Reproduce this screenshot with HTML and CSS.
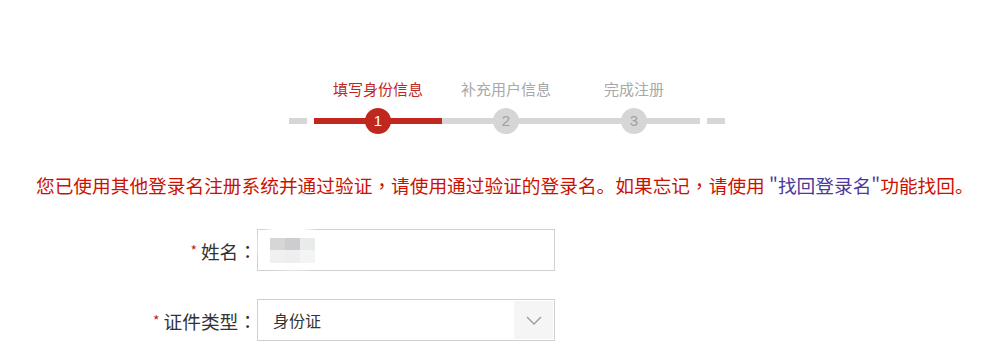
FILE: index.html
```html
<!DOCTYPE html>
<html lang="zh-CN">
<head>
<meta charset="UTF-8">
<title>填写身份信息</title>
<link rel="stylesheet" href="styles.css">
</head>
<body>

<!-- Etapes -->
<div class="steps">
    <span class="dash"></span>
    <div class="step done">
        <div class="step-label">填写身份信息</div>
        <div class="step-track"><span class="step-num">1</span></div>
    </div>
    <div class="step">
        <div class="step-label">补充用户信息</div>
        <div class="step-track"><span class="step-num">2</span></div>
    </div>
    <div class="step last">
        <div class="step-label">完成注册</div>
        <div class="step-track"><span class="step-num">3</span></div>
    </div>
    <span class="dash"></span>
</div>

<p class="notice">您已使用其他登录名注册系统并通过验证<span class="punct" lang="zh-TW">，</span>请使用通过验证的登录名。如果忘记<span class="punct" lang="zh-TW">，</span>请使用 <a href="#">"找回登录名"</a>功能找回。</p>

<!-- Formulaire -->
<form class="form">
    <div class="row">
        <label class="row-label"><i>*</i>姓名<span class="punct" lang="zh-TW">：</span></label>
        <div class="field">
            <input type="text" class="text-input">
            <span class="mosaic">
                <b class="m1"></b><b class="m2"></b><b class="m3"></b>
                <b class="m4"></b><b class="m5"></b><b class="m6"></b>
            </span>
        </div>
    </div>
    <div class="row">
        <label class="row-label"><i>*</i>证件类型<span class="punct" lang="zh-TW">：</span></label>
        <div class="field select">
            <span class="select-value">身份证</span>
            <span class="select-arrow">
                <svg width="16" height="9" viewBox="0 0 16 9"><path d="M1 1 L8 8 L15 1" fill="none" stroke="#9a9a9a" stroke-width="1.3"/></svg>
            </span>
        </div>
    </div>
</form>

</body>
</html>
```

FILE: styles.css
```css
body {
    margin: 0;
    background: #fff;
    font-family: "Noto Sans CJK SC", "Microsoft YaHei", sans-serif;
    color: #333;
}

/* ponctuation centrée */
.punct {
    font-family: "Noto Sans CJK TC", "Noto Sans CJK SC", sans-serif;
}

/* Etapes */
.steps {
    display: flex;
    align-items: flex-end;
    margin-left: 289px;
    padding-top: 79px;
}

.dash {
    width: 18px;
    height: 6px;
    margin-bottom: 10px;
    background: #d6d6d6;
}

.steps > .dash:first-child {
    margin-right: 7px;
}

.steps > .dash:last-child {
    margin-left: 7px;
}

.step {
    width: 128px;
}

.step.last {
    width: 130px;
}

.step-label {
    width: 128px;
    text-align: center;
    font-size: 15px;
    line-height: 20px;
    color: #a8a8a8;
}

.step.done .step-label {
    color: #c0281f;
}

.step-track {
    position: relative;
    height: 26px;
    margin-top: 9px;
}

.step-track::before {
    content: "";
    position: absolute;
    left: 0;
    right: 0;
    top: 10px;
    height: 6px;
    background: #d6d6d6;
}

.step.done .step-track::before {
    background: #c0281f;
}

.step-num {
    position: absolute;
    left: 51px;
    top: 0;
    width: 26px;
    height: 26px;
    border-radius: 50%;
    background: #d6d6d6;
    color: #a0a0a0;
    font-family: "Liberation Sans", Arial, sans-serif;
    font-size: 15px;
    line-height: 26px;
    text-align: center;
}

.step.done .step-num {
    background: #c0281f;
    color: #fff;
}

/* Message */
.notice {
    margin: 38px 0 0 36px;
    font-size: 18.7px;
    line-height: 26px;
    color: #cc1100;
    white-space: nowrap;
}

.notice a {
    color: #4b3a9c;
    text-decoration: none;
}

/* Formulaire */
.form {
    margin-top: 31px;
}

.row {
    display: flex;
    align-items: center;
    margin-bottom: 28px;
}

.row-label {
    width: 257px;
    text-align: right;
    font-size: 18.7px;
    color: #333;
}

.row-label i {
    font-style: normal;
    color: #c0281f;
    font-size: 14px;
    margin-right: 4px;
    vertical-align: 3px;
}

.field {
    position: relative;
    width: 298px;
    height: 42px;
}

.text-input {
    box-sizing: border-box;
    width: 100%;
    height: 100%;
    border: 1px solid #d0d0d0;
    padding: 0 12px;
    font-size: 16px;
    outline: none;
}

/* nom masqué */
.mosaic {
    position: absolute;
    left: 4px;
    top: -2px;
    width: 60px;
    height: 40px;
    padding: 11px 0 0 9px;
    box-sizing: border-box;
    display: grid;
    grid-template-columns: repeat(3, 15px);
    grid-template-rows: 12px 13px;
    align-content: start;
    background: #fff;
    border-radius: 45% 55% 40% 50%;
    box-shadow: 0 0 4px 3px #fff;
}

.m1 { background: #d7d6d5; }
.m2 { background: #cdcdd0; }
.m3 { background: #e9ebeb; }
.m4 { background: #f0f0f0; }
.m5 { background: #eceef0; }
.m6 { background: #f3f5f5; }

.select {
    box-sizing: border-box;
    display: flex;
    align-items: center;
    justify-content: space-between;
    border: 1px solid #d0d0d0;
    padding: 1px;
}

.select-value {
    padding-left: 14px;
    font-size: 16px;
    color: #333;
}

.select-arrow {
    display: flex;
    align-items: center;
    justify-content: center;
    width: 39px;
    height: 100%;
    background: #f5f5f5;
}
```
